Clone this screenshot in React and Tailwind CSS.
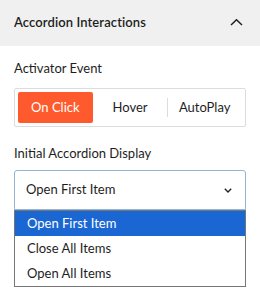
export default function App() {
  const font = { fontFamily: 'Lato, "Noto Sans", sans-serif' };
  return (
    <div style={font} className="w-[260px] h-[293px] bg-white text-[13px] text-[#1e1e1e]">
      <div className="h-[46px] bg-[#f0f0f0] flex items-center justify-between pl-[14px] pr-[17px]">
        <span className="font-semibold text-[13px] tracking-[0.1px]">Accordion Interactions</span>
        <svg width="13" height="9" viewBox="0 0 13 9" className="mt-[-2px]">
          <path d="M1 7 L6.5 1.8 L12 7" fill="none" stroke="#1e1e1e" strokeWidth="1.5" />
        </svg>
      </div>
      <div className="px-[14px]">
        <div className="mt-[13px] leading-[18px]">Activator Event</div>
        <div className="mt-[11px] h-[39px] border border-[#dcdcde] rounded-[2px] p-[3px] grid grid-cols-3">
          <div className="bg-[#ff5a2d] text-white rounded-[2px] flex items-center justify-center">On Click</div>
          <div className="flex items-center justify-center">Hover</div>
          <div className="flex items-center justify-center relative">
            <span className="absolute left-0 top-[6px] bottom-[6px] w-px bg-[#dcdcde]"></span>
            AutoPlay
          </div>
        </div>
        <div className="mt-[17px] leading-[18px]">Initial Accordion Display</div>
        <div className="mt-[8px] h-[40px] border border-[#93b5d3] rounded-t-[3px] flex items-center justify-between pl-[11px] pr-[13px]">
          <span>Open First Item</span>
          <svg width="8" height="5" viewBox="0 0 8 5">
            <path d="M0.8 0.8 L4 4 L7.2 0.8" fill="none" stroke="#1e1e1e" strokeWidth="1.3" />
          </svg>
        </div>
        <div className="border border-[#767676] flex flex-col">
          <div className="h-[25px] bg-[#1a66d2] text-white flex items-center pl-[12px]">Open First Item</div>
          <div className="h-[25px] flex items-center pl-[12px]">Close All Items</div>
          <div className="h-[25px] flex items-center pl-[12px]">Open All Items</div>
        </div>
      </div>
    </div>
  );
}
